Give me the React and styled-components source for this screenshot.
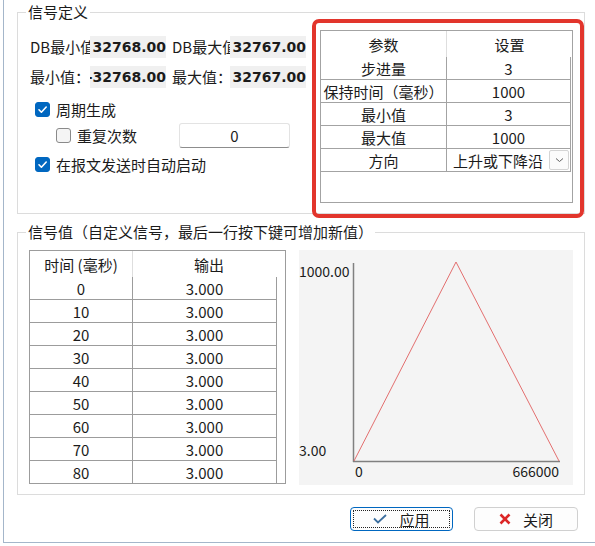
import React from 'react'
import styled, { createGlobalStyle } from 'styled-components'

const GlobalStyle = createGlobalStyle`
  html, body { margin:0; padding:0; background:#fff; }
  body {
    font-family:"Noto Sans CJK SC", "Noto Sans", sans-serif;
    font-size:15px;
    color:#1b1b1b;
  }
  * { box-sizing:border-box; }
`

const Window = styled.div`
  margin-left:3px;
  width:592px;
  height:543px;
  border-left:1px solid #a4b6ca;
  border-bottom:1px solid #a4b6ca;
  padding:12px 0 0 13px;
  display:flex;
  flex-direction:column;
`

const Group = styled.div`
  width:568px;
  height:${({$h})=>$h}px;
  margin-top:${({$mt})=>$mt||0}px;
  border:1px solid #dcdcdc;
  display:flex;
  flex-direction:column;
`
const GroupTitle = styled.div`
  align-self:flex-start;
  margin:-11px 0 0 8px;
  padding:0 2px;
  background:#fff;
  line-height:20px;
  white-space:nowrap;
`

const DefineBody = styled.div`
  display:flex;
  padding-left:12px;
`
const LeftPane = styled.div`
  display:flex;
  flex-direction:column;
  padding-top:14px;
`

const InfoRow = styled.div`
  display:flex;
  align-items:center;
  gap:6px;
  height:22px;
  margin-top:${({$mt})=>$mt||0}px;
`
const Pair = styled.div`
  display:flex;
  align-items:center;
`
const Label = styled.span`
  width:${({$w})=>$w}px;
  overflow:hidden;
  white-space:nowrap;
  line-height:22px;
`
const Reading = styled.span`
  width:76px;
  height:22px;
  display:flex;
  align-items:center;
  justify-content:flex-end;
  overflow:hidden;
  white-space:nowrap;
  background:#f0f0f0;
  font-family:"DejaVu Sans", sans-serif;
  font-weight:bold;
  font-size:14px;
`

const CheckRow = styled.div`
  display:flex;
  align-items:center;
  gap:6px;
  height:${({$h})=>$h||24}px;
  margin:${({$mt})=>$mt||0}px 0 0 ${({$indent})=>$indent}px;
`
const Box = styled.span`
  width:15px;
  height:15px;
  flex-shrink:0;
  border-radius:3px;
  display:flex;
  align-items:center;
  justify-content:center;
  background:${({$on})=>$on?'#0067c0':'#f5f5f5'};
  border:1px solid ${({$on})=>$on?'#0067c0':'#8a8a8a'};
`
const CountInput = styled.div`
  width:111px;
  height:25px;
  margin-left:36px;
  border:1px solid #e3e3e3;
  border-bottom-color:#8d8d8d;
  border-radius:3px;
  background:#fff;
  display:flex;
  align-items:center;
  justify-content:center;
`

const Highlight = styled.div`
  flex-shrink:0;
  width:272px;
  height:199px;
  margin:-3px 0 0 auto;
  border:4px solid #e2352c;
  border-radius:7px;
  padding:7px 0 0 4px;
`
const ParamTable = styled.div`
  width:253px;
  height:173px;
  border:1px solid #a3a3a3;
  display:flex;
  flex-direction:column;
`
const ParamHead = styled.div`
  display:grid;
  grid-template-columns:126px 1fr;
  height:26px;
`
const ParamRow = styled.div`
  display:grid;
  grid-template-columns:126px 1fr;
  width:250px;
  height:23px;
  border-right:1px solid #a3a3a3;
  border-bottom:1px solid #a3a3a3;
`
const Cell = styled.div`
  display:flex;
  align-items:center;
  justify-content:center;
  white-space:nowrap;
  border-right:${({$divider})=>$divider?`1px solid ${$divider}`:'none'};
`
const ComboCell = styled.div`
  display:flex;
  align-items:center;
  justify-content:space-between;
  padding:0 1px 0 6px;
  white-space:nowrap;
`
const ComboButton = styled.span`
  width:20px;
  height:20px;
  border:1px solid #d4d4d4;
  border-radius:2px;
  background:#fbfbfb;
  display:flex;
  align-items:center;
  justify-content:center;
`

const SeriesBody = styled.div`
  display:flex;
  gap:13px;
  padding:8px 0 0 11px;
`
const SeriesTable = styled.div`
  flex-shrink:0;
  width:257px;
  height:234px;
  border:1px solid #9c9c9c;
  display:flex;
  flex-direction:column;
`
const SeriesHead = styled.div`
  display:grid;
  grid-template-columns:103px 1fr;
  height:26px;
`
const SeriesRow = styled.div`
  display:grid;
  grid-template-columns:103px 1fr;
  width:247px;
  height:23px;
  border-right:1px solid #9c9c9c;
  border-bottom:1px solid #9c9c9c;
  &:last-child { border-bottom:none; height:22px; }
`
const Chart = styled.div`
  width:274px;
  height:235px;
  background:#f4f4f4;
  svg { display:block; }
  text { font-family:"Noto Sans CJK SC", "Noto Sans", sans-serif; font-size:14px; fill:#1b1b1b; }
`

const ButtonRow = styled.div`
  display:flex;
  justify-content:flex-end;
  gap:21px;
  margin-top:12px;
  padding-right:17px;
`
const Button = styled.button`
  width:${({$w})=>$w}px;
  height:24px;
  padding:0;
  border-radius:4px;
  background:#fdfdfd;
  border:1px solid ${({$focus})=>$focus?'#0067c0':'#d0d0d0'};
  outline:${({$focus})=>$focus?'1px dotted #222':'none'};
  outline-offset:-4px;
  display:flex;
  align-items:center;
  justify-content:center;
  gap:12px;
  font-family:inherit;
  font-size:15px;
  color:#1b1b1b;
`

const params = [
  ['步进量', '3'],
  ['保持时间（毫秒）', '1000'],
  ['最小值', '3'],
  ['最大值', '1000'],
]

const series = [0, 10, 20, 30, 40, 50, 60, 70, 80].map(t => [t, '3.000'])

function Tick() {
  return (
    <svg width="11" height="11" viewBox="0 0 11 11">
      <polyline points="2,5.8 4.4,8.2 9.2,3" fill="none" stroke="#fff" strokeWidth="1.6" strokeLinecap="round" strokeLinejoin="round"/>
    </svg>
  )
}

function Check({on}) {
  return <Box $on={on}>{on && <Tick/>}</Box>
}

export default function App() {
  return (
    <>
      <GlobalStyle/>
      <Window>
        <Group $h={202}>
          <GroupTitle>信号定义</GroupTitle>
          <DefineBody>
            <LeftPane>
              <InfoRow>
                <Pair><Label $w={60}>DB最小值</Label><Reading>32768.00</Reading></Pair>
                <Pair><Label $w={58}>DB最大值</Label><Reading>32767.00</Reading></Pair>
              </InfoRow>
              <InfoRow $mt={8}>
                <Pair><Label $w={60}>最小值：</Label><Reading>-32768.00</Reading></Pair>
                <Pair><Label $w={58}>最大值：</Label><Reading>32767.00</Reading></Pair>
              </InfoRow>
              <CheckRow $mt={9} $indent={5}>
                <Check on/>周期生成
              </CheckRow>
              <CheckRow $mt={2} $h={25} $indent={26}>
                <Check/>重复次数
                <CountInput>0</CountInput>
              </CheckRow>
              <CheckRow $mt={4} $indent={5}>
                <Check on/>在报文发送时自动启动
              </CheckRow>
            </LeftPane>
            <Highlight>
              <ParamTable>
                <ParamHead>
                  <Cell $divider="#dedede">参数</Cell>
                  <Cell>设置</Cell>
                </ParamHead>
                {params.map(([name, value]) => (
                  <ParamRow key={name}>
                    <Cell $divider="#a3a3a3">{name}</Cell>
                    <Cell>{value}</Cell>
                  </ParamRow>
                ))}
                <ParamRow>
                  <Cell $divider="#a3a3a3">方向</Cell>
                  <ComboCell>
                    上升或下降沿
                    <ComboButton>
                      <svg width="9" height="6" viewBox="0 0 9 6">
                        <polyline points="1,1.5 4.5,4.5 8,1.5" fill="none" stroke="#606060" strokeWidth="1"/>
                      </svg>
                    </ComboButton>
                  </ComboCell>
                </ParamRow>
              </ParamTable>
            </Highlight>
          </DefineBody>
        </Group>

        <Group $h={263} $mt={18}>
          <GroupTitle>信号值（自定义信号，最后一行按下键可增加新值）</GroupTitle>
          <SeriesBody>
            <SeriesTable>
              <SeriesHead>
                <Cell $divider="#dedede">时间 (毫秒)</Cell>
                <Cell>输出</Cell>
              </SeriesHead>
              {series.map(([t, v]) => (
                <SeriesRow key={t}>
                  <Cell $divider="#9c9c9c">{t}</Cell>
                  <Cell>{v}</Cell>
                </SeriesRow>
              ))}
            </SeriesTable>
            <Chart>
              <svg width="274" height="235">
                <line x1="54.5" y1="13" x2="54.5" y2="212" stroke="#808080" strokeWidth="1.5"/>
                <line x1="54" y1="211.5" x2="261" y2="211.5" stroke="#808080" strokeWidth="1.5"/>
                <polyline points="55,211 157,12 260,211" fill="none" stroke="#e36f6f" strokeWidth="1"/>
                <text x="0" y="27">1000.00</text>
                <text x="0" y="206">3.00</text>
                <text x="56" y="227">0</text>
                <text x="260" y="227" textAnchor="end">666000</text>
              </svg>
            </Chart>
          </SeriesBody>
        </Group>

        <ButtonRow>
          <Button $w={103} $focus>
            <svg width="14" height="10" viewBox="0 0 14 10">
              <polyline points="1,4.5 5,8.5 13,1" fill="none" stroke="#3d6f9f" strokeWidth="1.8"/>
            </svg>
            应用
          </Button>
          <Button $w={104}>
            <svg width="12" height="12" viewBox="0 0 12 12">
              <path d="M1.5 1.5 L10.5 10.5 M10.5 1.5 L1.5 10.5" stroke="#dc2626" strokeWidth="2.6"/>
            </svg>
            关闭
          </Button>
        </ButtonRow>
      </Window>
    </>
  )
}
